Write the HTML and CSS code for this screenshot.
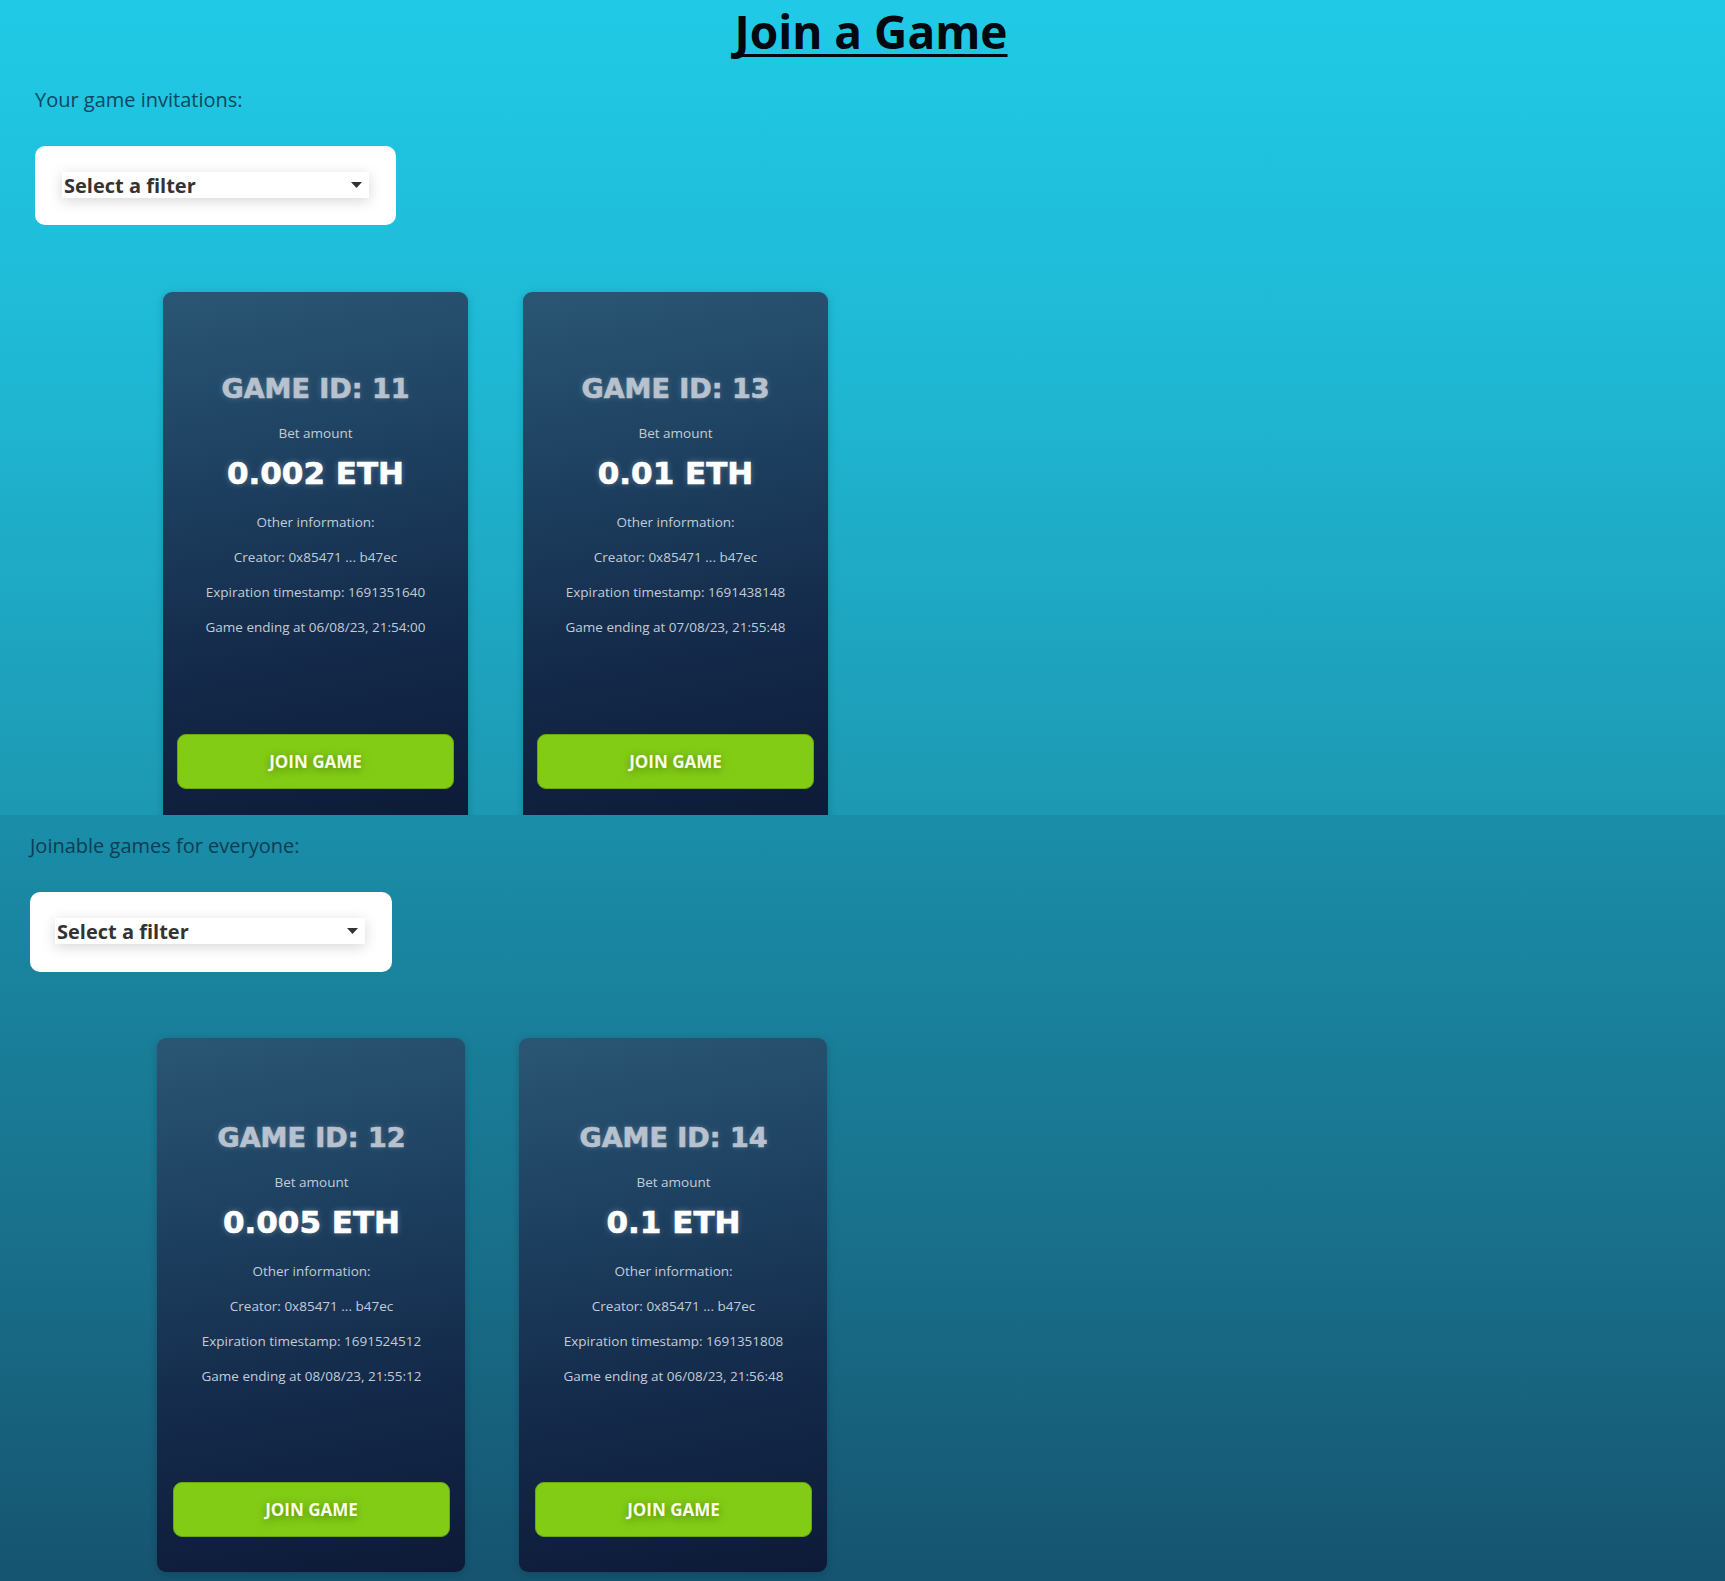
FILE: index.html
```html
<!DOCTYPE html>
<html lang="en">
<head>
<meta charset="utf-8">
<title>Join a Game</title>
<link rel="stylesheet" href="styles.css">
</head>
<body>
<div class="shot shot-top">
  <h1 class="title">Join a Game</h1>
  <div class="section section-a">
    <p class="label">Your game invitations:</p>
    <div class="filter-panel">
      <div class="select">
        <span>Select a filter</span>
        <svg class="caret" width="11" height="6" viewBox="0 0 11 6"><path d="M0 0H11L5.5 6Z" fill="#333"/></svg>
      </div>
    </div>
    <div class="cards">
      <div class="card">
        <div class="gid">GAME ID: 11</div>
        <div class="bet-label">Bet amount</div>
        <div class="amount">0.002 ETH</div>
        <div class="info">Other information:</div>
        <div class="info">Creator: 0x85471 ... b47ec</div>
        <div class="info">Expiration timestamp: 1691351640</div>
        <div class="info">Game ending at 06/08/23, 21:54:00</div>
        <button class="join">JOIN GAME</button>
      </div>
      <div class="card">
        <div class="gid">GAME ID: 13</div>
        <div class="bet-label">Bet amount</div>
        <div class="amount">0.01 ETH</div>
        <div class="info">Other information:</div>
        <div class="info">Creator: 0x85471 ... b47ec</div>
        <div class="info">Expiration timestamp: 1691438148</div>
        <div class="info">Game ending at 07/08/23, 21:55:48</div>
        <button class="join">JOIN GAME</button>
      </div>
    </div>
  </div>
</div>
<div class="shot shot-bottom">
  <div class="section section-b">
    <p class="label">Joinable games for everyone:</p>
    <div class="filter-panel">
      <div class="select">
        <span>Select a filter</span>
        <svg class="caret" width="11" height="6" viewBox="0 0 11 6"><path d="M0 0H11L5.5 6Z" fill="#333"/></svg>
      </div>
    </div>
    <div class="cards">
      <div class="card">
        <div class="gid">GAME ID: 12</div>
        <div class="bet-label">Bet amount</div>
        <div class="amount">0.005 ETH</div>
        <div class="info">Other information:</div>
        <div class="info">Creator: 0x85471 ... b47ec</div>
        <div class="info">Expiration timestamp: 1691524512</div>
        <div class="info">Game ending at 08/08/23, 21:55:12</div>
        <button class="join">JOIN GAME</button>
      </div>
      <div class="card">
        <div class="gid">GAME ID: 14</div>
        <div class="bet-label">Bet amount</div>
        <div class="amount">0.1 ETH</div>
        <div class="info">Other information:</div>
        <div class="info">Creator: 0x85471 ... b47ec</div>
        <div class="info">Expiration timestamp: 1691351808</div>
        <div class="info">Game ending at 06/08/23, 21:56:48</div>
        <button class="join">JOIN GAME</button>
      </div>
    </div>
  </div>
</div>
</body>
</html>
```

FILE: styles.css
```css
* { box-sizing: border-box; }

html, body {
  margin: 0;
  padding: 0;
}

body {
  width: 1725px;
  font-family: "Open Sans", "Noto Sans", sans-serif;
  background: #165470;
}

.shot {
  overflow: hidden;
  position: relative;
}

.shot-top {
  height: 815px;
  background: linear-gradient(to bottom, #20cae6 0%, #1fb8d4 45%, #1d98b2 100%);
}

.shot-bottom {
  height: 766px;
  background: linear-gradient(to bottom, #1a8ea9 0%, #19738e 50%, #165470 100%);
}

.title {
  margin: 0;
  padding: 1px 0 0 17px;
  text-align: center;
  font-family: "Open Sans", sans-serif;
  font-weight: 700;
  font-size: 46px;
  line-height: 60px;
  color: #03070f;
  text-decoration: underline;
  text-decoration-thickness: 3px;
  text-underline-offset: 5px;
  text-decoration-skip-ink: none;
}

.section-a {
  padding-left: 35px;
}

.section-b {
  padding-left: 30px;
  padding-top: 19px;
}

.label {
  margin: 0;
  font-size: 20px;
  line-height: 24px;
  color: #0d475d;
}

.section-b .label {
  color: #0c3e53;
}

.section-a .label {
  margin-top: 27px;
}

.filter-panel {
  margin-top: 34px;
  width: 361px;
  height: 79px;
  padding: 26px 27px 27px;
  background: #fff;
  border-radius: 10px;
}

.section-b .filter-panel {
  width: 362px;
  height: 80px;
  padding: 26px 25px 27px;
}

.select {
  height: 26px;
  width: 307px;
  display: flex;
  align-items: center;
  justify-content: space-between;
  padding: 0 7px 0 2px;
  background: #fff;
  box-shadow: 0 3px 14px rgba(0, 0, 0, 0.16);
  font-weight: 700;
  font-size: 20px;
  color: #333;
}

.section-b .select {
  width: 310px;
}

.cards {
  display: flex;
  gap: 55px;
  margin-top: 67px;
  margin-left: 128px;
}

.section-b .cards {
  margin-top: 66px;
  margin-left: 127px;
  gap: 54px;
}

.card {
  width: 305px;
  height: 532px;
  display: flex;
  flex-direction: column;
  align-items: center;
  padding: 81px 14px 35px;
  border-radius: 9px;
  background: linear-gradient(170deg, #2a5674 0%, #1d3f5f 35%, #142a4a 65%, #0d1a37 100%);
  box-shadow: 0 2px 8px rgba(0, 0, 0, 0.18);
  text-align: center;
}

.section-b .card {
  width: 308px;
  height: 534px;
  padding-top: 84px;
  padding-left: 16px;
  padding-right: 15px;
}

.gid {
  font-family: "DejaVu Sans", sans-serif;
  font-weight: 700;
  font-size: 27px;
  line-height: 32px;
  color: #b7c2ce;
  -webkit-text-stroke: 0.7px #b7c2ce;
  text-shadow: 0 0 6px rgba(190, 210, 230, 0.3);
}

.bet-label {
  margin-top: 18px;
  font-size: 13.5px;
  line-height: 20px;
  color: #c3ccd6;
}

.amount {
  margin-top: 12px;
  font-family: "DejaVu Sans", sans-serif;
  font-weight: 700;
  font-size: 31px;
  line-height: 36px;
  color: #fff;
  -webkit-text-stroke: 0.6px #fff;
  text-shadow: 0 0 6px rgba(255, 255, 255, 0.3);
}

.info {
  font-size: 13.5px;
  line-height: 35px;
  color: #c3ccd6;
}

.amount + .info {
  margin-top: 14px;
}

.join {
  margin-top: auto;
  width: 100%;
  height: 55px;
  border: 1px solid #6aa812;
  border-radius: 9px;
  background: #83cc16;
  font-family: "Open Sans", sans-serif;
  font-weight: 700;
  font-size: 17px;
  color: #fbfde8;
  text-shadow: 0 2px 8px rgba(40, 80, 0, 0.55);
  cursor: pointer;
}
```
